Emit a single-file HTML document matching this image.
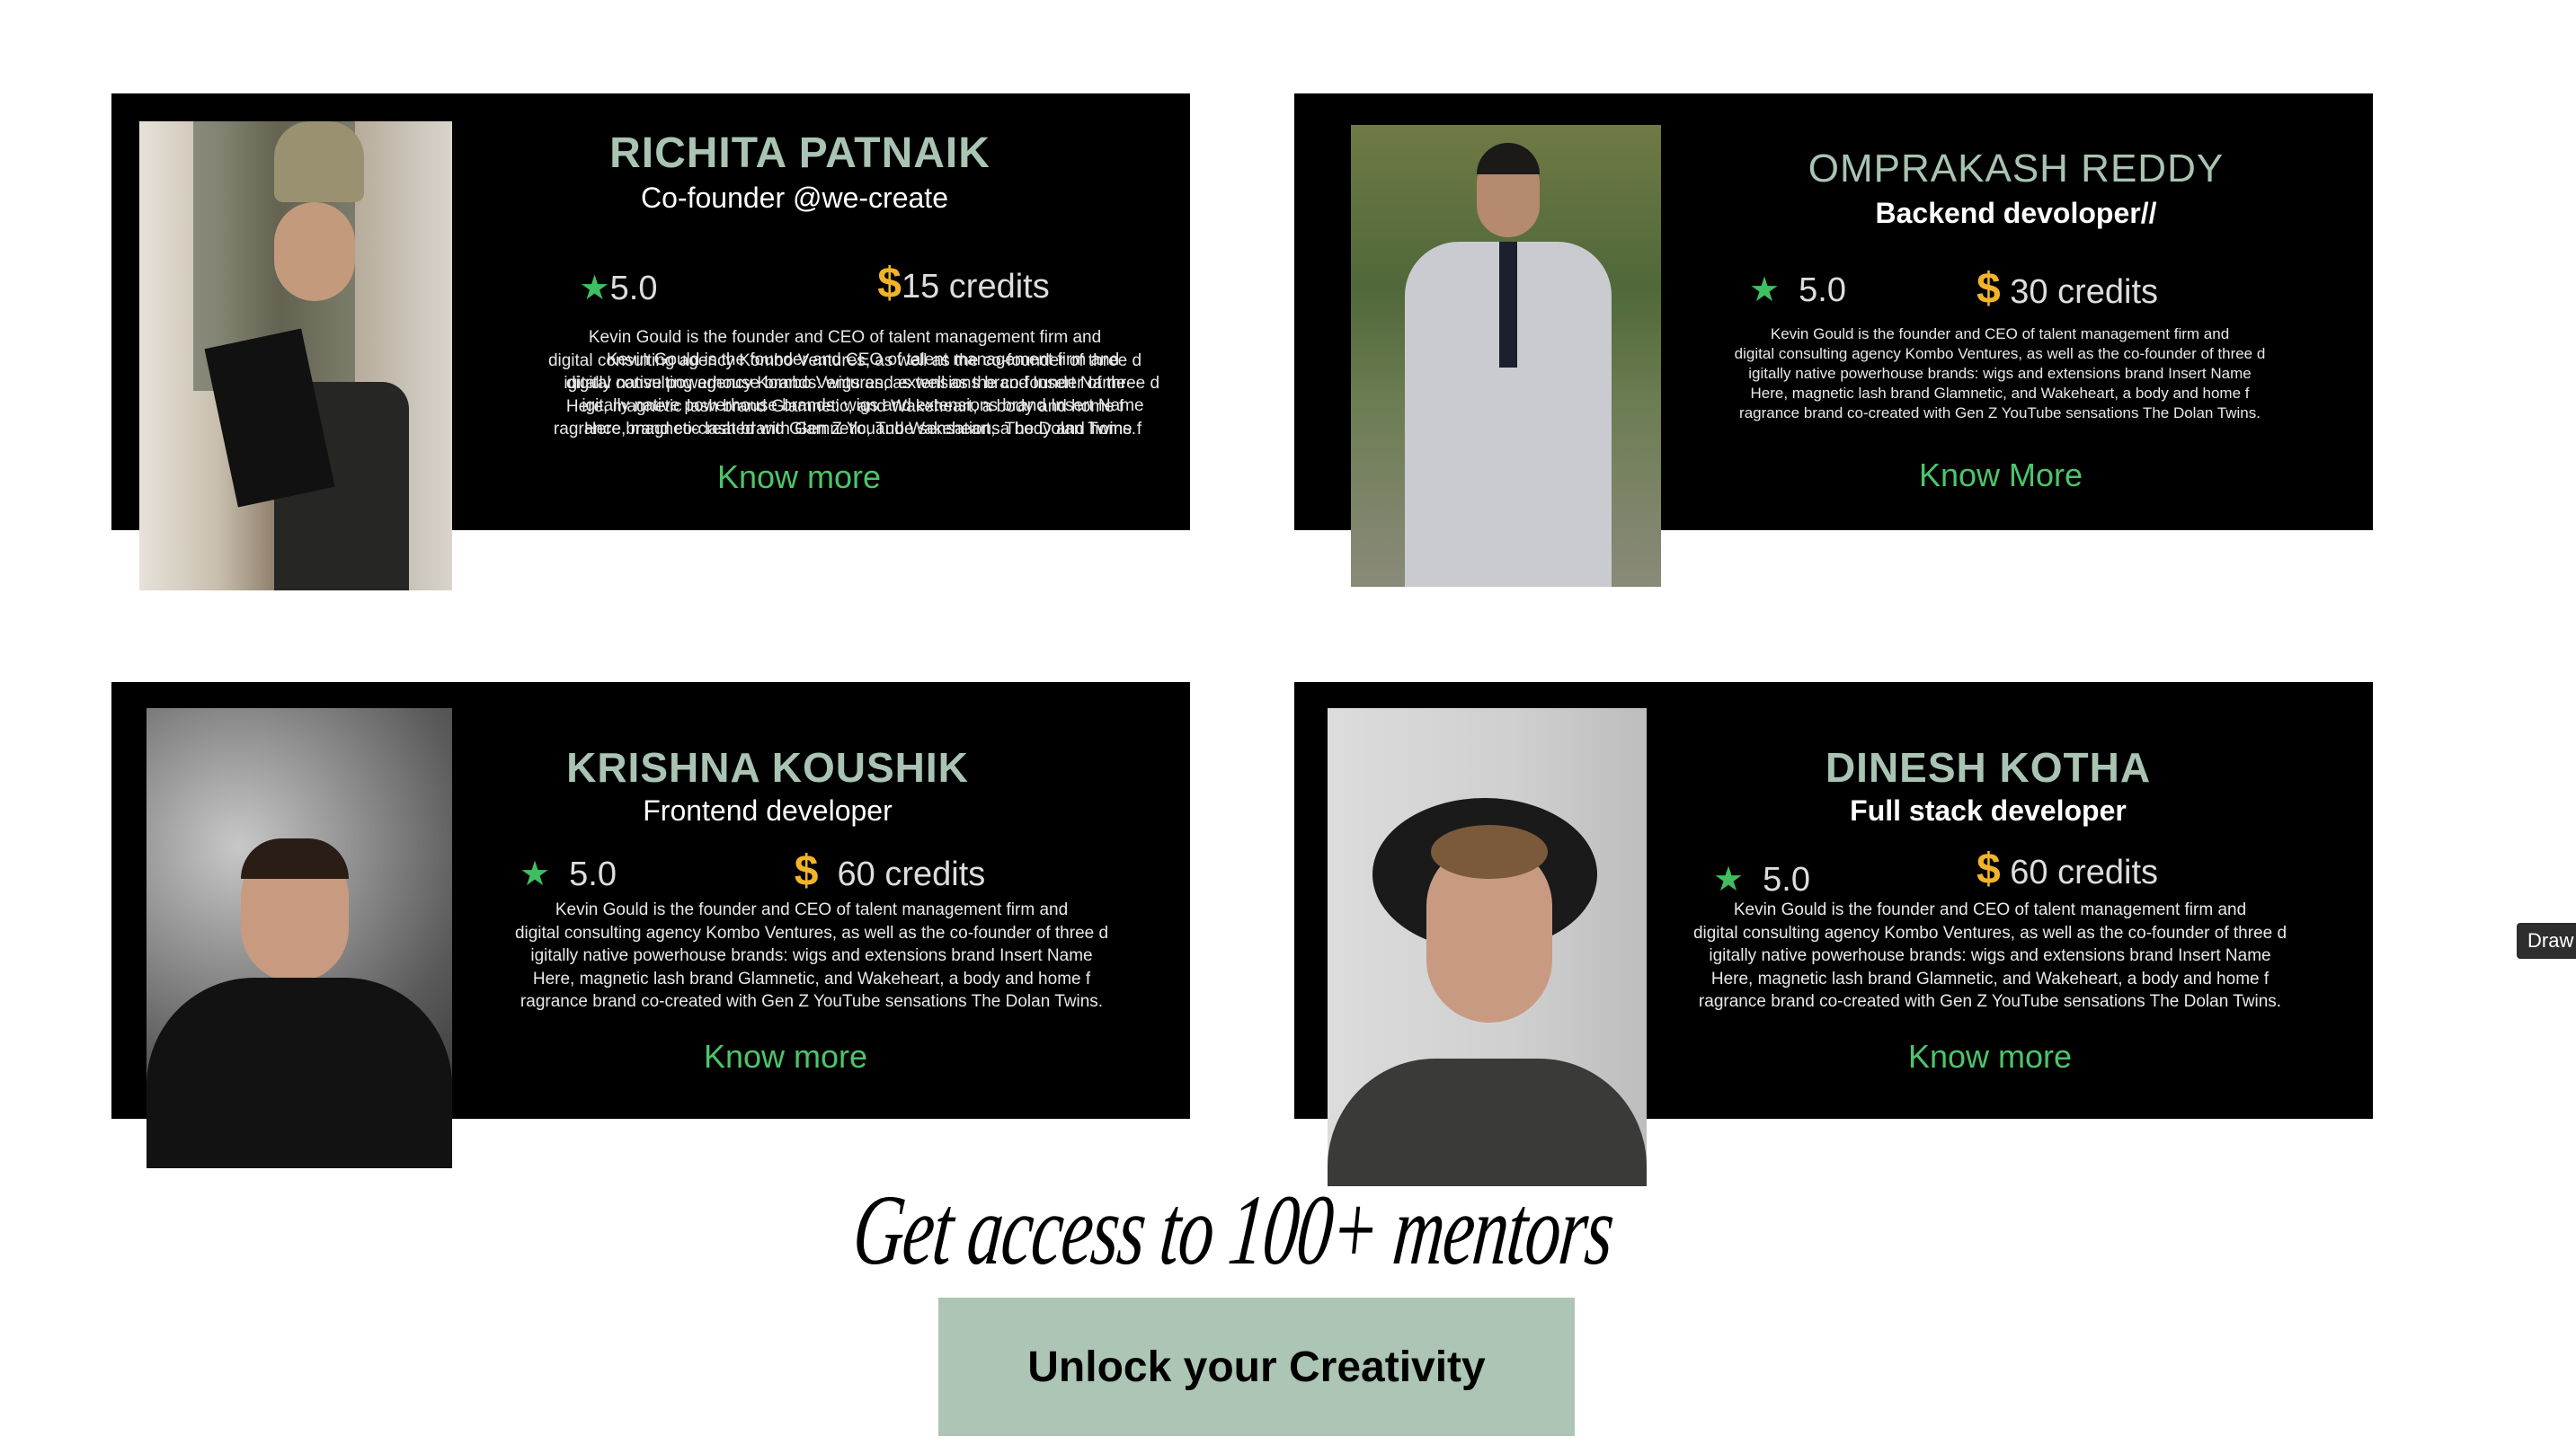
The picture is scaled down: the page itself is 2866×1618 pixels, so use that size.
<!DOCTYPE html>
<html><head><meta charset="utf-8">
<style>
*{margin:0;padding:0;box-sizing:border-box}
body{width:2866px;height:1618px;background:#fff;position:relative;overflow:hidden;font-family:"Liberation Sans",sans-serif}
.card{position:absolute;background:#000}
.photo{position:absolute;overflow:hidden}
.t{position:absolute;white-space:nowrap;transform:translateX(-50%);text-align:center}
.name{color:#a9c4b2;font-weight:bold;font-size:48px;letter-spacing:1px}
.sub{color:#fff;font-size:32px;font-family:"Liberation Sans Narrow","Liberation Sans",sans-serif}
.rate{color:#ddd;font-size:38px}
.star{color:#3fbf5f}
.dol{color:#f0b429;font-weight:bold;font-size:48px}
.desc{color:#e8e8e8;font-size:19px;line-height:25.5px}
.know{color:#4cc56a;font-size:36px}
</style></head><body>

<!-- Card 1 -->
<div class="card" style="left:124px;top:104px;width:1200px;height:486px"></div>
<div class="photo" style="left:155px;top:135px;width:348px;height:522px;background:linear-gradient(90deg,#e6e2da 0%,#c9bfae 25%,#8a7b68 45%,#b3a795 65%,#d8d4cc 100%)">
  <div style="position:absolute;left:60px;top:0;width:180px;height:300px;background:#3d4a3a;opacity:.5"></div>
  <div style="position:absolute;left:150px;top:0;width:100px;height:90px;border-radius:40px 40px 10px 10px;background:#9a9170"></div>
  <div style="position:absolute;left:150px;top:90px;width:90px;height:110px;border-radius:45px;background:#c49a7c"></div>
  <div style="position:absolute;left:150px;top:290px;width:150px;height:232px;border-radius:30px 30px 0 0;background:#262624"></div>
  <div style="position:absolute;left:90px;top:240px;width:110px;height:180px;background:#111;transform:rotate(-12deg)"></div>
</div>
<div class="t name" style="left:890px;top:143px">RICHITA PATNAIK</div>
<div class="t sub" style="left:884px;top:202px">Co-founder @we-create</div>
<div class="t rate" style="left:688px;top:298px"><span class="star">★</span>5.0</div>
<div class="t rate" style="left:1072px;top:288px"><span class="dol">$</span>15 credits</div>
<div class="t desc" style="left:940px;top:363px">Kevin Gould is the founder and CEO of talent management firm and<br>digital consulting agency Kombo Ventures, as well as the co-founder of three d<br>igitally native powerhouse brands: wigs and extensions brand Insert Name<br>Here, magnetic lash brand Glamnetic, and Wakeheart, a body and home f<br>ragrance brand co-created with Gen Z YouTube sensations The Dolan Twins.</div>
<div class="t desc" style="left:960px;top:388px">Kevin Gould is the founder and CEO of talent management firm and<br>digital consulting agency Kombo Ventures, as well as the co-founder of three d<br>igitally native powerhouse brands: wigs and extensions brand Insert Name<br>Here, magnetic lash brand Glamnetic, and Wakeheart, a body and home f</div>
<div class="t know" style="left:889px;top:510px">Know more</div>

<!-- Card 2 -->
<div class="card" style="left:1440px;top:104px;width:1200px;height:486px"></div>
<div class="photo" style="left:1503px;top:139px;width:345px;height:514px;background:linear-gradient(180deg,#6f7a45 0%,#50683a 35%,#6c7d52 60%,#8a8a7a 100%)">
  <div style="position:absolute;left:140px;top:30px;width:70px;height:95px;border-radius:35px;background:#b58a6e"></div>
  <div style="position:absolute;left:140px;top:20px;width:70px;height:35px;border-radius:35px 35px 0 0;background:#1c1a18"></div>
  <div style="position:absolute;left:60px;top:130px;width:230px;height:384px;border-radius:60px 60px 0 0;background:#c9cbd0"></div>
  <div style="position:absolute;left:165px;top:130px;width:20px;height:140px;background:#1b1f2e"></div>
</div>
<div class="t" style="left:2243px;top:163px;color:#a9c4b2;font-size:44px;letter-spacing:1px">OMPRAKASH REDDY</div>
<div class="t sub" style="left:2243px;top:219px;font-weight:bold">Backend devoloper//</div>
<div class="t rate" style="left:2000px;top:300px"><span class="star">★</span>&nbsp; 5.0</div>
<div class="t rate" style="left:2300px;top:294px"><span class="dol">$</span> 30 credits</div>
<div class="t desc" style="left:2225px;top:361px;font-size:17px;line-height:22px">Kevin Gould is the founder and CEO of talent management firm and<br>digital consulting agency Kombo Ventures, as well as the co-founder of three d<br>igitally native powerhouse brands: wigs and extensions brand Insert Name<br>Here, magnetic lash brand Glamnetic, and Wakeheart, a body and home f<br>ragrance brand co-created with Gen Z YouTube sensations The Dolan Twins.</div>
<div class="t know" style="left:2226px;top:508px">Know More</div>

<!-- Card 3 -->
<div class="card" style="left:124px;top:759px;width:1200px;height:486px"></div>
<div class="photo" style="left:163px;top:788px;width:340px;height:512px;background:radial-gradient(circle at 30% 30%,#c8c8c8,#5a5a5a 60%,#2a2a2a)">
  <div style="position:absolute;left:105px;top:150px;width:120px;height:155px;border-radius:60px;background:#c89a80"></div>
  <div style="position:absolute;left:105px;top:145px;width:120px;height:45px;border-radius:60px 60px 0 0;background:#2a1d16"></div>
  <div style="position:absolute;left:0;top:300px;width:340px;height:212px;border-radius:120px 120px 0 0;background:#121212"></div>
</div>
<div class="t name" style="left:854px;top:827px;font-size:46px">KRISHNA KOUSHIK</div>
<div class="t sub" style="left:854px;top:884px">Frontend developer</div>
<div class="t rate" style="left:632px;top:950px"><span class="star">★</span>&nbsp; 5.0</div>
<div class="t rate" style="left:990px;top:942px"><span class="dol">$</span>&nbsp; 60 credits</div>
<div class="t desc" style="left:903px;top:1000px">Kevin Gould is the founder and CEO of talent management firm and<br>digital consulting agency Kombo Ventures, as well as the co-founder of three d<br>igitally native powerhouse brands: wigs and extensions brand Insert Name<br>Here, magnetic lash brand Glamnetic, and Wakeheart, a body and home f<br>ragrance brand co-created with Gen Z YouTube sensations The Dolan Twins.</div>
<div class="t know" style="left:874px;top:1155px">Know more</div>

<!-- Card 4 -->
<div class="card" style="left:1440px;top:759px;width:1200px;height:486px"></div>
<div class="photo" style="left:1477px;top:788px;width:355px;height:532px;background:linear-gradient(90deg,#dcdcdc,#cfcfcf 60%,#bdbdbd)">
  <div style="position:absolute;left:50px;top:100px;width:250px;height:170px;border-radius:50%;background:#1a1a1a"></div>
  <div style="position:absolute;left:110px;top:150px;width:140px;height:200px;border-radius:70px;background:#c99a82"></div>
  <div style="position:absolute;left:115px;top:130px;width:130px;height:60px;border-radius:50%;background:#7a5a3a"></div>
  <div style="position:absolute;left:0;top:390px;width:355px;height:142px;border-radius:120px 120px 0 0;background:#3a3a38"></div>
</div>
<div class="t name" style="left:2212px;top:827px;font-size:46px">DINESH KOTHA</div>
<div class="t sub" style="left:2212px;top:884px;font-weight:bold">Full stack developer</div>
<div class="t rate" style="left:1960px;top:956px"><span class="star">★</span>&nbsp; 5.0</div>
<div class="t rate" style="left:2300px;top:940px"><span class="dol">$</span> 60 credits</div>
<div class="t desc" style="left:2214px;top:1000px">Kevin Gould is the founder and CEO of talent management firm and<br>digital consulting agency Kombo Ventures, as well as the co-founder of three d<br>igitally native powerhouse brands: wigs and extensions brand Insert Name<br>Here, magnetic lash brand Glamnetic, and Wakeheart, a body and home f<br>ragrance brand co-created with Gen Z YouTube sensations The Dolan Twins.</div>
<div class="t know" style="left:2214px;top:1155px">Know more</div>

<!-- Headline & button -->
<div class="t" style="left:1372px;top:1305px;font-family:'Liberation Serif',serif;font-style:italic;font-size:112px;color:#000;letter-spacing:-2px;transform:translateX(-50%) scaleX(0.7) skewX(-8deg)">Get access to 100+ mentors</div>
<div style="position:absolute;left:1044px;top:1444px;width:708px;height:154px;background:#adc5b4;display:flex;align-items:center;justify-content:center;font-weight:bold;font-size:48px;color:#000">Unlock your Creativity</div>

<div style="position:absolute;left:2800px;top:1027px;width:66px;height:40px;background:#2e2e2e;color:#fff;font-size:22px;line-height:40px;padding-left:12px;border-radius:4px 0 0 4px">Draw</div>
</body></html>
